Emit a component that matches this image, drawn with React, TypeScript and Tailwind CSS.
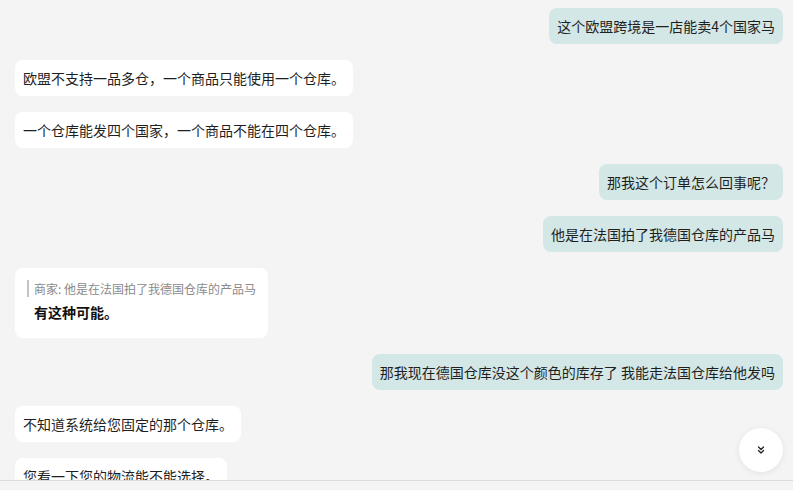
import React from 'react';
import { ChevronsDown } from 'lucide-react';

type Message =
  | { id: number; side: 'me' | 'them'; text: string }
  | { id: number; side: 'them'; text: string; quote: string };

const messages: Message[] = [
  { id: 1, side: 'me', text: '这个欧盟跨境是一店能卖4个国家马' },
  { id: 2, side: 'them', text: '欧盟不支持一品多仓，一个商品只能使用一个仓库。' },
  { id: 3, side: 'them', text: '一个仓库能发四个国家，一个商品不能在四个仓库。' },
  { id: 4, side: 'me', text: '那我这个订单怎么回事呢？' },
  { id: 5, side: 'me', text: '他是在法国拍了我德国仓库的产品马' },
  { id: 6, side: 'them', text: '有这种可能。', quote: '商家: 他是在法国拍了我德国仓库的产品马' },
  { id: 7, side: 'me', text: '那我现在德国仓库没这个颜色的库存了 我能走法国仓库给他发吗' },
  { id: 8, side: 'them', text: '不知道系统给您固定的那个仓库。' },
  { id: 9, side: 'them', text: '您看一下您的物流能不能选择。' },
];

function Bubble({ msg }: { msg: Message }) {
  if ('quote' in msg) {
    return (
      <div className="self-start bg-white rounded-lg px-3 pt-3 pb-4">
        <div className="border-l-2 border-[#c4c4c4] pl-[5px] text-xs leading-[17px] text-[#8a8a8a]">
          {msg.quote}
        </div>
        <div className="mt-[5px] pl-[7px] text-sm leading-5 font-bold text-[#111]">{msg.text}</div>
      </div>
    );
  }

  const isMe = msg.side === 'me';
  return (
    <div
      className={`rounded-lg px-2 py-2 text-sm leading-5 text-[#1f1f1f] ${
        isMe ? 'self-end bg-[#d3e7e6]' : 'self-start bg-white'
      }`}
    >
      {msg.text}
    </div>
  );
}

export default function App() {
  return (
    <div
      className="relative w-[793px] h-[490px] bg-[#f4f4f4] overflow-hidden"
      style={{ fontFamily: '"Noto Sans CJK SC", "Noto Sans", sans-serif' }}
    >
      <div className="h-[480px] overflow-hidden flex flex-col gap-4 pt-2 pl-[15px] pr-[10px]">
        {messages.map((m) => (
          <Bubble key={m.id} msg={m} />
        ))}
      </div>
      <div className="h-[10px] border-t border-[#dcdcdc] bg-[#f4f4f4]" />

      {/* scroll to bottom */}
      <button
        className="absolute left-[739px] top-[428px] w-11 h-11 rounded-full bg-white shadow-[0_1px_6px_rgba(0,0,0,0.08)] flex items-center justify-center"
        aria-label="Scroll to bottom"
      >
        <ChevronsDown size={12} strokeWidth={2.5} className="text-[#222]" />
      </button>
    </div>
  );
}
